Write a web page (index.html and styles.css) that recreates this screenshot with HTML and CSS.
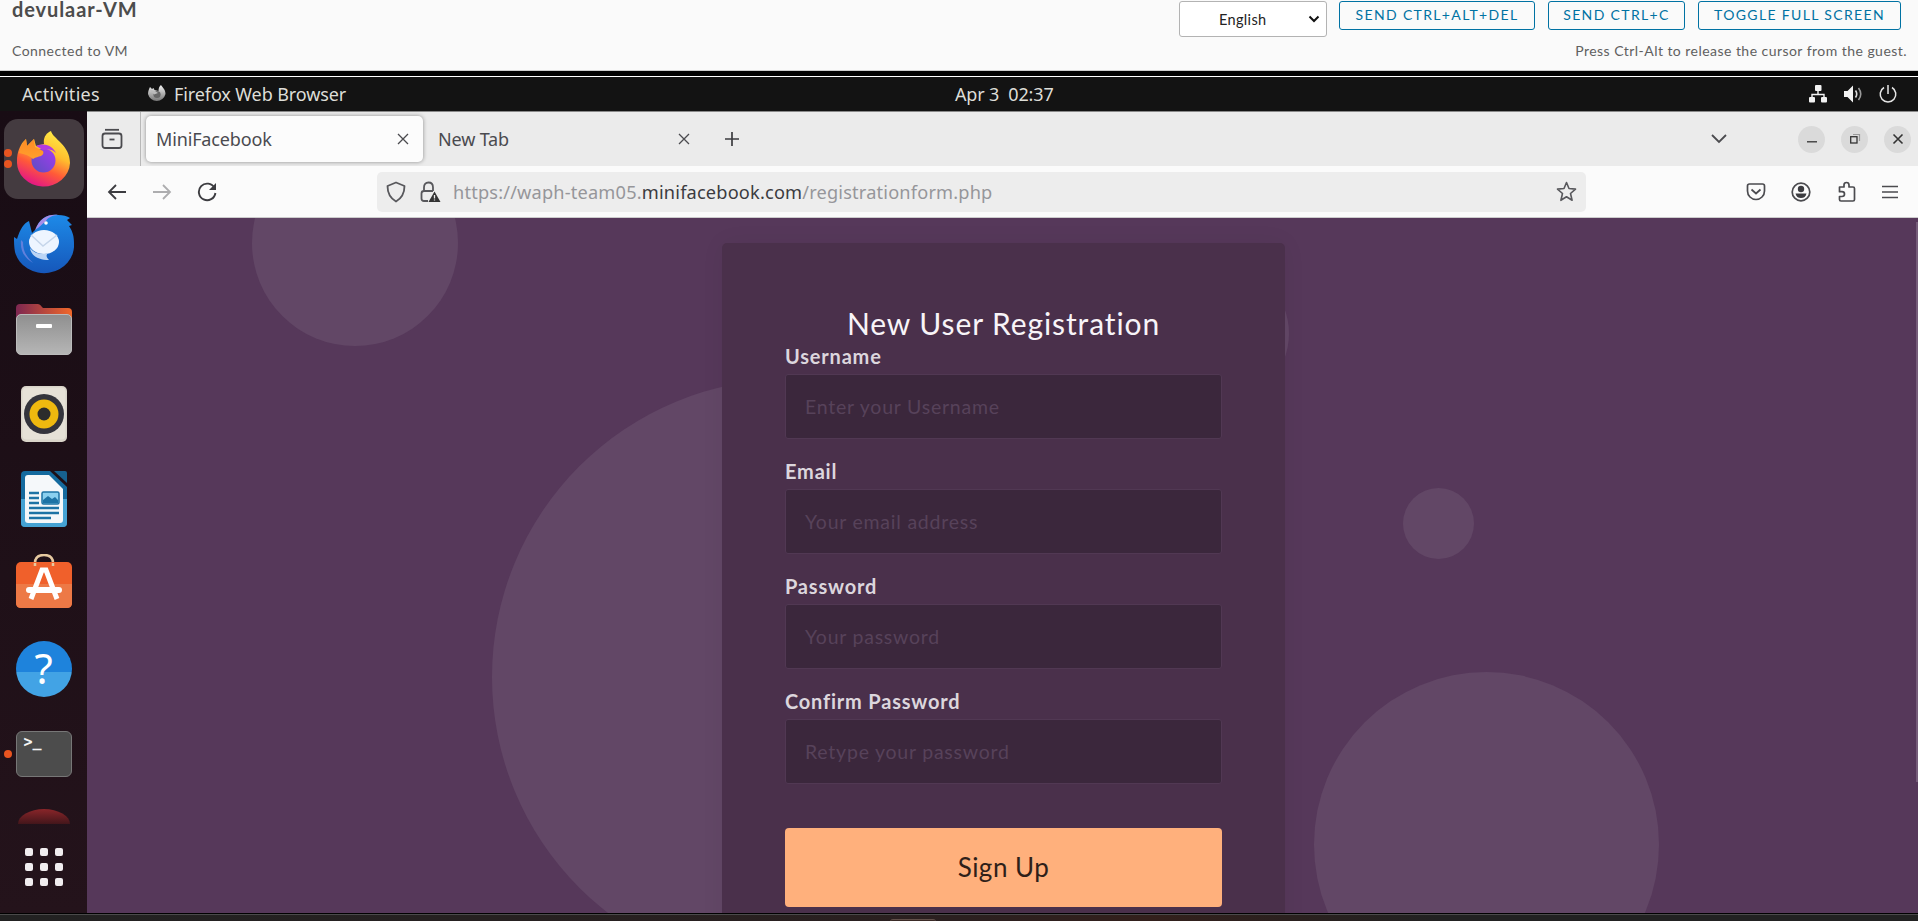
FILE: index.html
```html
<!DOCTYPE html>
<html lang="en">
<head>
<meta charset="utf-8">
<title>devulaar-VM</title>
<link rel="stylesheet" href="styles.css">
</head>
<body>
<header class="console">
  <div class="console-left">
    <h1 class="vm-name"><span>devulaar-VM</span></h1>
    <p class="note"><span>Connected to VM</span></p>
  </div>
  <div class="console-right">
    <div class="actions">
      <div class="lang"><span>English</span><svg width="12" height="8" viewBox="0 0 12 8"><path d="M1.5 1.5 6 6l4.500-4.500" fill="none" stroke="#111" stroke-width="2"/></svg></div>
      <button class="act a1">SEND CTRL+ALT+DEL</button>
      <button class="act a2">SEND CTRL+C</button>
      <button class="act a3">TOGGLE FULL SCREEN</button>
    </div>
    <p class="note"><span>Press Ctrl-Alt to release the cursor from the guest.</span></p>
  </div>
</header>
<div class="screen">
  <div class="gnome">
    <span class="activities">Activities</span>
    <svg class="ffmono" width="20" height="20" viewBox="0 0 20 20"><defs><linearGradient id="mono" x1="0" y1="0" x2="0" y2="1"><stop offset="0" stop-color="#f2f2f2"/><stop offset="1" stop-color="#777"/></linearGradient></defs><path d="M1 10c0-3 1-5 2-7l2 2 1.500-1 1 2 4 1c0-3 1-5 2.500-6 1 2 4.500 4 4.500 9a9 9 0 0 1-17.500 0z" fill="url(#mono)"/><circle cx="10" cy="10.500" r="3.600" fill="#666"/><path d="M3 6l5 1 3 2-4 1.500z" fill="#bbb"/></svg>
    <span class="appname">Firefox Web Browser</span>
    <span class="clock">Apr 3&nbsp; 02:37</span>
    <div class="tray">
      <svg width="20" height="20" viewBox="0 0 20 20" fill="#f2f2f2"><rect x="7" y="1" width="6.500" height="6" rx="1"/><rect x="1" y="13" width="6" height="5.500" rx="1"/><rect x="13" y="13" width="6" height="5.500" rx="1"/><path d="M10 7v3.500M4 13.500v-3h12v3" fill="none" stroke="#f2f2f2" stroke-width="1.400"/></svg>
      <svg width="20" height="20" viewBox="0 0 20 20"><path d="M1 7h3.500L10 1.500v17L4.500 13H1z" fill="#f2f2f2"/><path d="M12.500 6.500q2.500 3.500 0 7" fill="none" stroke="#ddd" stroke-width="1.600"/><path d="M15.500 4q4.500 6 0 12" fill="none" stroke="#999" stroke-width="1.600"/></svg>
      <svg width="20" height="20" viewBox="0 0 20 20" fill="none" stroke="#e6e6e6" stroke-width="1.500"><path d="M6 3.500a7.800 7.800 0 1 0 8 0M10 1v9"/></svg>
    </div>
  </div>
  <div class="desktop">
    <nav class="dock">
      <div class="slot active"><i class="dot d1"></i><i class="dot d2"></i>
        <svg width="54" height="56" viewBox="0 0 54 56"><defs><linearGradient id="fx" x1=".8" y1="0" x2=".35" y2="1"><stop offset="0" stop-color="#fff14a"/><stop offset=".4" stop-color="#ffbd2d"/><stop offset=".68" stop-color="#ff5a38"/><stop offset="1" stop-color="#e31587"/></linearGradient><linearGradient id="fy" x1="0" y1="0" x2="0" y2="1"><stop offset="0" stop-color="#ff8a25"/><stop offset="1" stop-color="#ffa02c"/></linearGradient><linearGradient id="fp" x1="1" y1="0" x2="0" y2="1"><stop offset="0" stop-color="#a63af0"/><stop offset="1" stop-color="#5a4fc0"/></linearGradient></defs><path d="M0 30C0 21 3 15 6 11l3-3 1 7 7-7 2 7 8-2C26 7 29 2 34 0c2 8 19 14 19 32A26.500 24.500 0 0 1 0 30z" fill="url(#fx)"/><ellipse cx="26.500" cy="29.500" rx="12" ry="12" fill="url(#fp)"/><path d="M2 22C3 17 5 12 9 8l1 7 7-7 1 8 8 4c1 2 0 4-2 5-3 1-5 1-8 3-3-3-8-5-14-6z" fill="url(#fy)"/><path d="M19 15c10-4 17 1 20 7-4-4-7-4-13-3z" fill="#b43ae0"/></svg></div>
      <div class="slot"><svg width="60" height="60" viewBox="0 0 60 60"><defs><linearGradient id="tb" x1="0" y1="0" x2="0" y2="1"><stop offset="0" stop-color="#1d8ae8"/><stop offset="1" stop-color="#1657ba"/></linearGradient></defs><path d="M0 23L3 25C6 15 10 9 15 7l3 12 4-4C25 5 33 0 44 1c5 0 9 1 12 3l-3 2 5 5-3 1c4 6 5 11 5 17A30 28 0 0 1 1 38c-1-5-1-10-1-15z" fill="url(#tb)"/><path d="M21 16C26 4 34 0 44 1c-5 0-11 3-12 6-4 3-6 6-11 9z" fill="#a58de8"/><circle cx="32" cy="9" r="1.800" fill="#fff"/><ellipse cx="30" cy="28" rx="15" ry="12" fill="#eef5ff"/><path d="M17 21l12 11 14-11" fill="none" stroke="#c5d5ea" stroke-width="1.500"/><path d="M16 34c5 6 11 7 18 5-2 2-2 4 1 7-10 0-18-4-19-12z" fill="#bcd5f5"/><path d="M7 26c-1 12 4 18 12 23-8-8-10-13-10-21z" fill="#6180dc"/></svg></div>
      <div class="slot"><svg width="56" height="52" viewBox="0 0 56 52"><defs><linearGradient id="fo"><stop stop-color="#7d2751"/><stop offset="1" stop-color="#f1682a"/></linearGradient><linearGradient id="fg" x1="0" y1="0" x2="0" y2="1"><stop stop-color="#8f8f8f"/><stop offset="1" stop-color="#b6b6b6"/></linearGradient></defs><path d="M0 5q0-4 4-4h18q2 0 4 3l1 1h25q4 0 4 4v15H0z" fill="url(#fo)"/><rect x=".5" y="11.500" width="55" height="40" rx="4.500" fill="url(#fg)" stroke="#bbb"/><rect x="20" y="21" width="16" height="4" rx="1" fill="#fff"/></svg></div>
      <div class="slot"><svg width="46" height="56" viewBox="0 0 46 56"><rect width="46" height="56" rx="5" fill="#d9d4c9"/><rect x="1.500" y="1.500" width="43" height="52" rx="4" fill="#e6e1d7"/><circle cx="23" cy="28" r="20" fill="#34343c"/><circle cx="23" cy="28" r="14.500" fill="#efb90f"/><circle cx="23" cy="28" r="6.500" fill="#2c2c2c"/></svg></div>
      <div class="slot"><svg width="46" height="56" viewBox="0 0 46 56"><path d="M4 0h25l17 16v36q0 4-4 4H4q-4 0-4-4V4q0-4 4-4z" fill="#146a9e"/><path d="M0 28h46v24q0 4-4 4H4q-4 0-4-4z" fill="#45a3d4"/><path d="M7 4h21l14 14v31q0 3-3 3H7q-3 0-3-3V7q0-3 3-3z" fill="#f5f8fa"/><path d="M33 0h11q2 0 2 2v10z" fill="#17618f"/><path d="M8 22h10M8 27h10M8 32h10M8 37h30M8 42h30M8 47h22" stroke="#1d73a5" stroke-width="2.300"/><rect x="21" y="21" width="17" height="12" rx="1.500" fill="#8ad0ef" stroke="#1d73a5" stroke-width="1.500"/><path d="M22 32v-3l5-4 4 3 3-2 3 3v3z" fill="#1d73a5"/></svg></div>
      <div class="slot store"><svg width="56" height="54" viewBox="0 0 56 54"><path d="M19 13V9q0-8 9-8t9 8v4" fill="none" stroke="#e6c9a0" stroke-width="2.500"/><rect y="8" width="56" height="46" rx="5" fill="#f0602b"/><path d="M0 30h56v19q0 5-5 5H5q-5 0-5-5z" fill="#ed7946"/><path d="M19 12v-3M37 12v-3" stroke="#e6c9a0" stroke-width="2.500"/><path d="M15 45l11-29h4l11 29" fill="none" stroke="#fff" stroke-width="5"/><rect x="10" y="33" width="36" height="6" rx="3" fill="#fff"/></svg></div>
      <div class="slot"><div class="help">?</div></div>
      <div class="slot"><i class="dot d3"></i><div class="term">&gt;_</div></div>
      <div class="partial"></div>
      <div class="apps"><i></i><i></i><i></i><i></i><i></i><i></i><i></i><i></i><i></i></div>
    </nav>
    <main class="browser">
      <div class="tabs">
        <div class="view"><svg width="22" height="22" viewBox="0 0 22 22" fill="none" stroke="#4b4b4f" stroke-width="1.800"><path d="M4 1.800h14"/><rect x="1.500" y="5.500" width="19" height="14.500" rx="2.500"/><path d="M8.500 11.500h5"/></svg></div>
        <div class="tab current"><span>MiniFacebook</span><svg width="12" height="12" viewBox="0 0 12 12"><path d="M1 1l10 10M11 1 1 11" stroke="#4b4b4f" stroke-width="1.300"/></svg></div>
        <div class="tab other"><span>New Tab</span><svg width="12" height="12" viewBox="0 0 12 12"><path d="M1 1l10 10M11 1 1 11" stroke="#4b4b4f" stroke-width="1.300"/></svg></div>
        <svg class="plus" width="16" height="16" viewBox="0 0 16 16"><path d="M8 1v14M1 8h14" stroke="#3c3c40" stroke-width="1.700"/></svg>
        <svg class="chev" width="16" height="10" viewBox="0 0 16 10"><path d="M1 1l7 7 7-7" fill="none" stroke="#4b4b4f" stroke-width="1.800"/></svg>
        <div class="wins">
          <b><svg width="12" height="12" viewBox="0 0 12 12"><path d="M1 8.800h10" stroke="#333" stroke-width="1.300"/></svg></b>
          <b><svg width="12" height="12" viewBox="0 0 12 12" fill="none"><path d="M4 1.500h6.500V8" stroke="#999" stroke-width="1.200"/><rect x="1.700" y="3.700" width="6.300" height="6.300" stroke="#333" stroke-width="1.300"/></svg></b>
          <b><svg width="12" height="12" viewBox="0 0 12 12"><path d="M1.500 1.500l9 9M10.500 1.500l-9 9" stroke="#333" stroke-width="1.600"/></svg></b>
        </div>
      </div>
      <div class="toolbar">
        <svg class="back" width="20" height="18" viewBox="0 0 20 18"><path d="M19 9H2M9 2 2 9l7 7" fill="none" stroke="#3c3c40" stroke-width="1.800"/></svg>
        <svg class="fwd" width="20" height="18" viewBox="0 0 20 18"><path d="M1 9h17M11 2l7 7-7 7" fill="none" stroke="#adadaf" stroke-width="1.800"/></svg>
        <svg class="reload" width="20" height="20" viewBox="0 0 20 20"><path d="M17.500 6a8.300 8.300 0 1 0 .9 5" fill="none" stroke="#3c3c40" stroke-width="1.900"/><path d="M19 1v7h-7z" fill="#3c3c40"/></svg>
        <div class="url">
          <svg class="shield" width="20" height="22" viewBox="0 0 20 22"><path d="M10 1.500 18.500 5C18.500 12 16 17 10 20.500 4 17 1.500 12 1.500 5z" fill="none" stroke="#58585c" stroke-width="1.800" stroke-linejoin="round"/></svg>
          <svg class="lock" width="21" height="22" viewBox="0 0 21 22"><path d="M4 10V6.500q0-5 4.500-5t4.500 5V10M8 20H4q-2.500 0-2.500-2.500v-5Q1.500 10 4 10h9" fill="none" stroke="#58585c" stroke-width="1.800"/><path d="M14.500 10.500 20.500 21h-12z" fill="#333"/><path d="M14.500 14v3.500M14.500 18.500v1" stroke="#eee" stroke-width="1.300"/></svg>
          <span class="addr">https://waph-team05.<b>minifacebook.com</b>/registrationform.php</span>
          <svg class="star" width="21" height="21" viewBox="0 0 21 21"><path d="M10.500 1.500 13 7.500l6.500.6-5 4.400 1.600 6.800-5.600-3.500-5.600 3.500 1.600-6.800-5-4.400L8 7.500z" fill="none" stroke="#58585c" stroke-width="1.600" stroke-linejoin="round"/></svg>
        </div>
        <div class="tools">
          <svg width="20" height="20" viewBox="0 0 20 20" fill="none" stroke="#4b4b4f" stroke-width="1.700"><path d="M3.500 2h13q2 0 2 2v5a8.500 8.500 0 0 1-17 0V4q0-2 2-2z"/><path d="M5.500 7.500 10 11.500l4.500-4"/></svg>
          <svg width="20" height="20" viewBox="0 0 20 20"><circle cx="10" cy="10" r="8.800" fill="none" stroke="#4b4b4f" stroke-width="1.700"/><circle cx="10" cy="7" r="3.200" fill="#3c3c40"/><path d="M4.500 11.500h11q-1 4.500-5.500 4.500t-5.500-4.500z" fill="#3c3c40"/></svg>
          <svg width="20" height="22" viewBox="0 0 20 22"><path d="M2.500 6H7V4q0-2.500 2.500-2.500T12 4v2h4q1.500 0 1.500 1.500v11q0 1.500-1.500 1.500H4q-1.500 0-1.500-1.500V15.500h2.500q2.500 0 2.500-2.400T5 10.700H2.500z" fill="none" stroke="#4b4b4f" stroke-width="1.700" stroke-linejoin="round"/></svg>
          <svg width="16" height="14" viewBox="0 0 16 14"><path d="M0 1.500h16M0 7h16M0 12.500h16" stroke="#4b4b4f" stroke-width="1.600"/></svg>
        </div>
      </div>
      <section class="page">
        <i class="bubble b1"></i><i class="bubble b2"></i><i class="bubble b3"></i><i class="bubble b4"></i><i class="bubble b5"></i>
        <form class="card">
          <h2><span>New User Registration</span></h2>
          <label>Username</label><div class="field"><span>Enter your Username</span></div>
          <label>Email</label><div class="field"><span>Your email address</span></div>
          <label>Password</label><div class="field"><span>Your password</span></div>
          <label>Confirm Password</label><div class="field"><span>Retype your password</span></div>
          <div class="submit"><span>Sign Up</span></div>
        </form>
        <i class="scroll"></i>
      </section>
    </main>
  </div>
  <footer class="taskbar"><i></i></footer>
</div>
</body>
</html>
```
FILE: styles.css
```css
* { box-sizing: border-box; }
html, body { margin: 0; height: 921px; overflow: hidden; }
body { display: flex; flex-direction: column; background: #000; font-family: "Noto Sans", sans-serif; }
svg { display: block; flex: none; }
span { white-space: nowrap; }
i { display: block; }

/* console header */
.console { height: 71px; flex: none; background: #fafafa; border-bottom: 1px solid #ccc; display: flex; justify-content: space-between; padding: 0 11px 0 12px; color: #606060; font-family: Lato, sans-serif; }
.vm-name { margin: 0; height: 37px; font-size: 20px; line-height: 18px; font-weight: 700; color: #4c4c4c; letter-spacing: .9px; }
.note { margin: 0; height: 28px; line-height: 28px; font-size: 14px; letter-spacing: .46px; }
.console-right { display: flex; flex-direction: column; align-items: flex-end; }
.actions { display: flex; height: 37px; gap: 13px; padding: 1px 6px 0 0; }
.lang { width: 148px; height: 36px; margin-right: -1px; border: 1px solid #b3b3b3; border-radius: 3px; background: #fff; display: flex; align-items: center; padding: 0 6px 0 39px; justify-content: space-between; font-size: 14.500px; letter-spacing: .35px; color: #222; }
.act { height: 29px; border: 1px solid #0072a3; border-radius: 3px; background: transparent; color: #0072a3; font: 14px/25px Lato, sans-serif; letter-spacing: 1.350px; padding: 0 0 2px; white-space: nowrap; }
.a1 { width: 196px; } .a2 { width: 137px; } .a3 { width: 203px; }

/* guest desktop */
.screen { flex: 1; display: flex; flex-direction: column; padding-top: 5px; min-height: 0; }
.gnome { height: 35px; flex: none; background: #131313; border-top: 1px solid #fff; display: flex; align-items: center; color: #deded8; font-size: 18px; position: relative; padding-left: 22px; }
.activities { width: 125px; letter-spacing: .3px; }
.ffmono { margin-right: 7px; }
.appname { letter-spacing: -.1px; }
.clock { position: absolute; left: 955px; letter-spacing: -.15px; }
.tray { margin-left: auto; display: flex; gap: 15px; padding-right: 20px; }
.desktop { flex: 1; display: flex; min-height: 0; }
.dock { width: 87px; flex: none; background: linear-gradient(#180c14, #24131b); padding-top: 8px; display: flex; flex-direction: column; align-items: center; overflow: hidden; }
.slot { width: 80px; height: 80px; margin-bottom: 5px; border-radius: 14px; display: flex; align-items: center; justify-content: center; position: relative; flex: none; }
.active { background: #443b40; }
.store { padding-bottom: 6px; }
.dot { position: absolute; left: 0; width: 8px; height: 8px; border-radius: 50%; background: #e95420; }
.d1 { top: 30px; } .d2 { top: 41px; } .d3 { top: 36px; }
.help { width: 56px; height: 56px; border-radius: 50%; background: linear-gradient(#1e83dc 0 55%, #42a3e5 55%); color: #fff; font: 42px/54px "Noto Sans", sans-serif; text-align: center; }
.term { width: 56px; height: 46px; border-radius: 6px; border: 1px solid #777; background: #4c4c4c; color: #f4f4f4; font: bold 15px/20px "DejaVu Sans Mono", monospace; padding-left: 7px; }
.partial { width: 52px; height: 15px; margin-top: 10px; background: linear-gradient(#8a2529, #43161b); border-radius: 50% 50% 0 0 / 100% 100% 0 0; flex: none; }
.apps { display: grid; grid-template-columns: repeat(3, 8px); gap: 7px; margin-top: 24px; }
.apps i { width: 8px; height: 8px; border-radius: 2px; background: #f1edef; }

/* browser chrome */
.browser { flex: 1; display: flex; flex-direction: column; min-width: 0; }
.tabs { height: 55px; flex: none; background: #ebebeb; border-top: 1px solid #8a8a8a; display: flex; align-items: center; color: #4a4a4f; font-size: 18px; letter-spacing: -.15px; }
.view { width: 54px; height: 54px; border-right: 1px solid #b8b8b8; padding: 16px 0 0 14px; }
.tab { display: flex; align-items: center; justify-content: space-between; height: 46px; padding: 0 14px 0 10px; }
.current { width: 277px; margin-left: 5px; border-radius: 5px; background: #fcfcfc; box-shadow: 0 0 4px #0006; }
.other { width: 271px; margin-left: 4px; padding: 0 8px 0 11px; }
.plus { margin-left: 26px; }
.chev { margin-left: auto; margin-right: 71px; }
.wins { display: flex; gap: 16px; padding-right: 7px; }
.wins b { width: 27px; height: 27px; border-radius: 50%; background: #dadada; display: grid; place-items: center; }
.toolbar { height: 52px; flex: none; background: #fbfbfb; border-bottom: 1px solid #ccc; display: flex; align-items: center; padding-left: 20px; }
.fwd { margin-left: 25px; } .reload { margin-left: 25px; }
.url { width: 1209px; height: 40px; margin-left: 160px; border-radius: 5px; background: #ededed; display: flex; align-items: center; padding: 0 9px; }
.lock { margin-left: 14px; }
.addr { margin-left: 12px; color: #96969a; font-size: 18.200px; letter-spacing: .18px; }
.addr b { font-weight: 400; color: #3b3b3f; }
.star { margin-left: auto; }
.tools { margin-left: auto; display: flex; align-items: center; gap: 25.500px; padding-right: 20px; }

/* registration page */
.page { flex: 1; background: #56385a; position: relative; overflow: hidden; padding: 25px 0 0 635px; font-family: Lato, sans-serif; min-height: 0; }
.bubble { position: absolute; border-radius: 50%; background: #624766; }
.b1 { left: 165px; top: -78px; width: 206px; height: 206px; }
.b2 { left: 405px; top: 161px; width: 596px; height: 596px; }
.b3 { left: 1316px; top: 270px; width: 71px; height: 71px; }
.b4 { left: 1227px; top: 454px; width: 345px; height: 345px; }
.b5 { left: 1061px; top: 45px; width: 141px; height: 141px; }
.card { position: relative; width: 563px; height: 720px; background: #4a304b; border-radius: 5px; padding: 62px 63px 0; box-shadow: 0 0 24px #0000000d; }
.card h2 { margin: 0; height: 38px; line-height: 37px; font-size: 30px; font-weight: 400; color: #f8f4f8; text-align: center; letter-spacing: .9px; }
.card label { display: block; height: 31px; line-height: 26px; font-size: 20px; font-weight: 700; color: #dcd6dd; letter-spacing: .8px; }
.field { height: 65px; margin-bottom: 19px; border: 1px solid #513853; border-radius: 3px; background: #3b273c; color: #57425a; font-size: 19.500px; line-height: 63px; padding-left: 19px; letter-spacing: .77px; }
.submit { height: 79px; margin-top: 44px; border-radius: 4px; background: #ffb07c; color: #2e2019; text-align: center; font-size: 26px; line-height: 79px; letter-spacing: .5px; }
.scroll { position: absolute; right: 0; top: 4px; width: 2px; height: 560px; background: #755c79; }
.taskbar { height: 8px; flex: none; border-top: 1px solid #000; background: linear-gradient(90deg, #222, #2b2020 50%, #33201c 60%, #222 75%); box-shadow: inset 0 1px #4a4a4a; overflow: hidden; padding-top: 5px; }
.taskbar i { width: 46px; height: 3px; margin-left: 890px; border-radius: 3px 3px 0 0; border-top: 1px solid #62504a; background: #3b2b27; }
```
